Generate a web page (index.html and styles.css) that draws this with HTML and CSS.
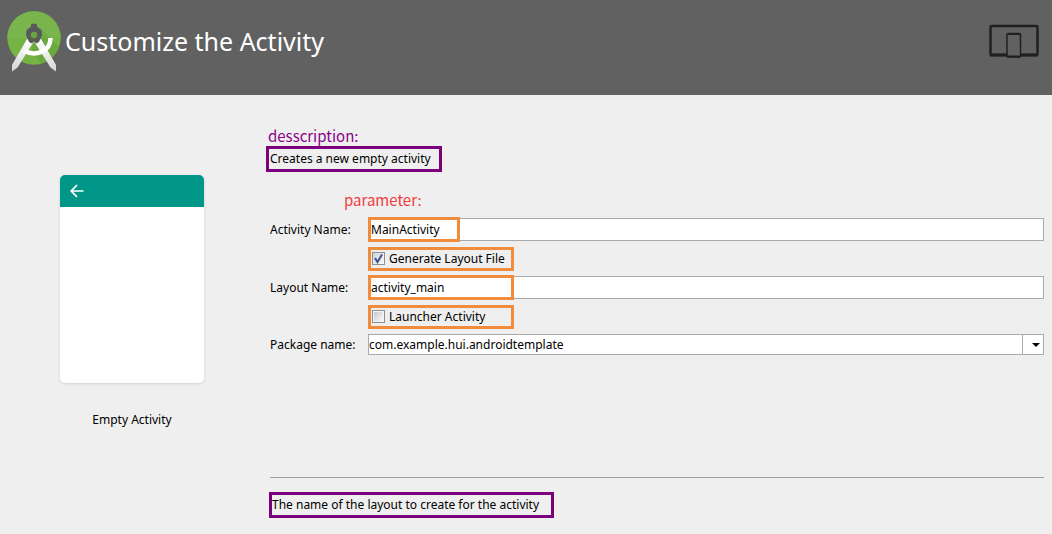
FILE: index.html
```html
<!DOCTYPE html>
<html lang="en">
<head>
<meta charset="utf-8">
<title>Customize the Activity</title>
<link rel="stylesheet" href="styles.css">
</head>
<body>
<header class="banner">
  <svg class="logo" viewBox="0 0 56 62" aria-hidden="true">
    <defs>
      <linearGradient id="leg" x1="0" y1="0" x2="0" y2="1"><stop offset="0" stop-color="#fff"/><stop offset="1" stop-color="#d6d6d6"/></linearGradient>
      <clipPath id="disc"><circle cx="27" cy="27" r="26.700"/></clipPath>
    </defs>
    <circle cx="27" cy="27" r="26.700" fill="#74b344"/>
    <g clip-path="url(#disc)">
      <path d="M0 0h54v27H0z" fill="#79b44c"/>
      <path d="M33 17l24 24v16H38L24 40z" fill="#62a039" opacity=".5"/>
    </g>
    <path d="M20 28L5 54v6.500l5.500-4L26.500 31zM34 28L49 54v6.500l-5.500-4L27.500 31z" fill="url(#leg)"/>
    <path d="M17 39.500C28 46 43.500 41 43.500 27" fill="none" stroke="#fff" stroke-width="4.500"/>
    <path d="M24 18v-4q0-1.500 3-1.500t3 1.500v4z" fill="#595959"/>
    <path d="M19.500 19l4-3h7l4 3 .5 5-3 7-3 1.500-2-2.500-2 2.500-3-1.500-3-7z" fill="#595959"/>
    <circle cx="27" cy="24" r="3.300" fill="#6ba23f"/>
  </svg>
  <h1 class="title">Customize the Activity</h1>
  <svg class="devices" viewBox="0 0 50 34" aria-hidden="true">
    <rect x="1.500" y="2" width="47" height="29" rx="1" fill="none" stroke="#202020" stroke-width="2.500"/>
    <path d="M1 31h48" stroke="#202020" stroke-width="3"/>
    <rect x="18" y="9.500" width="13.500" height="23.500" rx="1" fill="#616161" stroke="#202020" stroke-width="1.500"/>
    <path d="M18 10h13.500M18 32.500h13.500" stroke="#202020" stroke-width="2"/>
  </svg>
</header>
<main class="content">
  <figure class="preview">
    <div class="phone">
      <div class="phone-bar">
        <svg class="back" viewBox="0 0 14 14" aria-hidden="true"><path d="M13.500 7H1.500M7 1.200L1.200 7 7 12.800" fill="none" stroke="#fff" stroke-width="1.700"/></svg>
      </div>
    </div>
    <figcaption>Empty Activity</figcaption>
  </figure>
  <section class="details">
    <p class="note note-purple">desscription:</p>
    <p class="boxed">Creates a new empty activity</p>
    <p class="note note-red">parameter:</p>
    <form class="form">
      <label for="activity">Activity Name:</label>
      <div class="field">
        <input class="text" id="activity" type="text" value="MainActivity">
        <span class="mark mark-short"></span>
      </div>
      <div class="check">
        <input class="box" id="generate" type="checkbox" checked>
        <label for="generate">Generate Layout File</label>
      </div>
      <label for="layout">Layout Name:</label>
      <div class="field">
        <input class="text" id="layout" type="text" value="activity_main">
        <span class="mark"></span>
      </div>
      <div class="check">
        <input class="box" id="launcher" type="checkbox">
        <label for="launcher">Launcher Activity</label>
      </div>
      <label for="package">Package name:</label>
      <div class="field">
        <select class="combo" id="package"><option>com.example.hui.androidtemplate</option></select>
        <span class="drop"><svg width="8" height="4" viewBox="0 0 8 4" aria-hidden="true"><path d="M0 0h8L4 4z"/></svg></span>
      </div>
    </form>
    <hr class="rule">
    <p class="boxed boxed-help">The name of the layout to create for the activity</p>
  </section>
</main>
</body>
</html>
```
FILE: styles.css
```css
* { box-sizing: border-box; }
body {
  margin: 0;
  background: #efefef;
  color: #000;
  font: 12px/20px "Noto Sans", "Open Sans", sans-serif;
}
p, h1, figure { margin: 0; }

.banner {
  display: flex;
  align-items: flex-start;
  padding: 11px 13px 0 7px;
  height: 95px;
  background: #616161;
}
.logo { width: 56px; height: 62px; }
.title {
  flex: 1;
  padding: 14px 0 0 2px;
  color: #fff;
  font-size: 25px;
  font-weight: 400;
  line-height: 32px;
}
.devices { width: 50px; height: 34px; margin-top: 13px; }

.content {
  display: grid;
  grid-template-columns: 144px 1fr;
  column-gap: 62px;
  padding: 31px 8px 16px 60px;
}
.preview { padding-top: 49px; text-align: center; }
.phone {
  height: 208px;
  margin-bottom: 27px;
  overflow: hidden;
  border-radius: 5px;
  background: #fff;
  box-shadow: 0 1px 3px rgba(0, 0, 0, .12);
}
.phone-bar {
  display: flex;
  align-items: center;
  height: 32px;
  padding-left: 10px;
  background: #009688;
}
.back { width: 14px; height: 14px; }

.note {
  font-family: "Noto Sans CJK SC", "Noto Sans", sans-serif;
  font-size: 15px;
  line-height: 20px;
}
.note-purple { padding-left: 2px; color: #8b008b; }
.note-red { padding-left: 78px; margin: 18px 0 8px; color: #f23c3c; }
.boxed {
  width: fit-content;
  padding: 0 8px 0 1px;
  border: 3px solid #7b007b;
}

.form {
  display: grid;
  grid-template-columns: 98px 1fr;
  grid-template-rows: repeat(4, 23px) 21px;
  row-gap: 6px;
  margin-left: 4px;
  align-items: center;
}
.field { position: relative; display: flex; }
.text, .combo {
  width: 100%;
  height: 23px;
  margin: 0;
  padding: 0 2px;
  border: 1px solid #aaa;
  border-radius: 0;
  background: #fff;
  color: #000;
  font: inherit;
}
.combo { height: 21px; padding: 0; appearance: none; }
.mark {
  position: absolute;
  inset: -1px auto -1px 0;
  width: 146px;
  border: 3px solid #f08c3c;
  pointer-events: none;
}
.mark-short { width: 92px; }
.drop {
  position: absolute;
  inset: 0 0 0 auto;
  display: flex;
  align-items: center;
  justify-content: center;
  width: 22px;
  padding-left: 4px;
  border-left: 1px solid #aaa;
  pointer-events: none;
}
.check {
  grid-column: 2;
  display: flex;
  align-items: center;
  gap: 4px;
  width: 146px;
  height: 24px;
  padding-left: 1px;
  border: 3px solid #f08c3c;
}
.box {
  appearance: none;
  width: 13px;
  height: 13px;
  margin: 0;
  border: 1px solid #8e8f8f;
  background: linear-gradient(135deg, #c4c8ce, #fafafa) content-box, #f4f4f4;
  padding: 1px;
}
.box:checked {
  background: url("data:image/svg+xml,%3Csvg xmlns='http://www.w3.org/2000/svg' viewBox='0 0 11 11'%3E%3Cpath d='M2 5l2.500 4L9 1.500' fill='none' stroke='%23404f8f' stroke-width='2'/%3E%3C/svg%3E"), linear-gradient(135deg, #d0d4da, #fafafa);
}

.rule {
  margin: 122px 0 14px 4px;
  border: 0;
  border-top: 1px solid #a0a0a0;
}
.boxed-help { margin-left: 3px; padding: 0 12px 0 0; }
```
